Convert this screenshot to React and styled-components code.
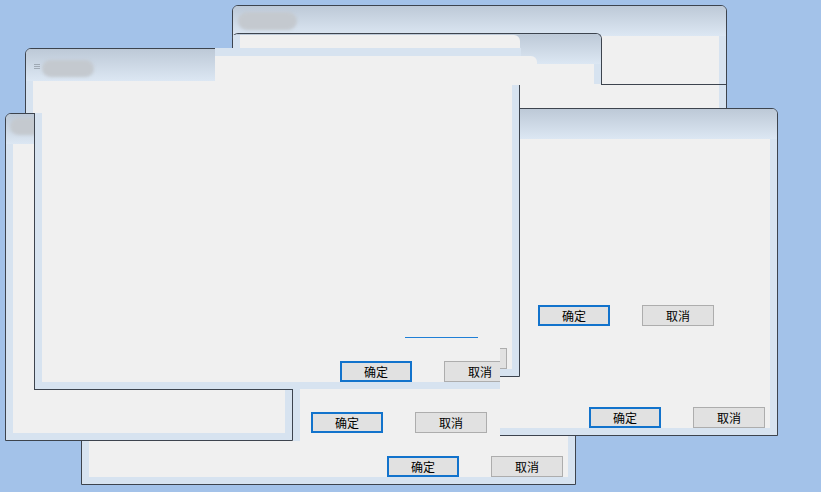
import React from "react";
import styled, { createGlobalStyle } from "styled-components";

const FRAME = "#d7e3f0";
const BORDER = "#3d444e";
const CLIENT = "#f0f0f0";
const DESK = "#a3c2e9";

const Global = createGlobalStyle`
  html, body { margin: 0; padding: 0; overflow: hidden; background: ${DESK}; }
  body { font-family: "Noto Sans CJK SC", "Noto Sans", sans-serif; }
`;

const Desktop = styled.div`
  position: relative;
  width: 821px;
  height: 492px;
  overflow: hidden;
  background: ${DESK};
`;

const Win = styled.div`
  position: absolute;
  left: ${(p) => p.$x}px;
  top: ${(p) => p.$y}px;
  width: ${(p) => p.$w}px;
  height: ${(p) => p.$h}px;
  box-sizing: border-box;
  display: flex;
  flex-direction: column;
  background: ${FRAME};
  border: 1px solid ${BORDER};
  border-bottom-width: ${(p) => (p.$open ? 0 : 1)}px;
  border-top-width: ${(p) => (p.$headless ? 0 : 1)}px;
  border-radius: ${(p) => (p.$headless ? "0" : "6px 6px 0 0")};
  overflow: hidden;
`;

const TitleBar = styled.div`
  flex: none;
  height: ${(p) => p.$h}px;
  background: linear-gradient(#bdc9d7, #dce7f3);
  display: flex;
  align-items: flex-start;
  gap: 2px;
  padding-left: ${(p) => p.$pad}px;
`;

const TitleBlur = styled.div`
  width: ${(p) => p.$w}px;
  height: ${(p) => p.$h}px;
  margin-top: ${(p) => p.$top}px;
  border-radius: 9px;
  background: #c4c9cf;
  filter: blur(1.5px);
`;

const TitleIcon = styled.svg`
  flex: none;
  margin-top: 15px;
  margin-left: -4px;
  opacity: 0.7;
`;

const Client = styled.div`
  flex: 1;
  position: relative;
  margin: 0 7px ${(p) => (p.$open ? 0 : 7)}px;
  background: ${CLIENT};
  display: flex;
  justify-content: flex-end;
  align-items: flex-end;
  padding: 0 5px 0;
`;

const ButtonRow = styled.div`
  display: flex;
  gap: 32px;
`;

const Btn = styled.button`
  box-sizing: border-box;
  width: 72px;
  height: 21px;
  margin: 0;
  padding: 0;
  display: flex;
  align-items: center;
  justify-content: center;
  background: #e1e1e1;
  border: ${(p) => (p.$primary ? "2px solid #1273cc" : "1px solid #adadad")};
  border-radius: 0;
  font: 12px "Noto Sans CJK SC", sans-serif;
  color: #000;
`;

const GhostRow = styled.div`
  position: absolute;
  left: ${(p) => p.$x}px;
  top: ${(p) => p.$y}px;
`;

const Seam = styled.div`
  position: absolute;
  left: ${(p) => p.$x}px;
  top: ${(p) => p.$y}px;
  width: ${(p) => p.$w}px;
  height: 1px;
  background: ${BORDER};
`;

const Scrap = styled.div`
  position: absolute;
  box-sizing: border-box;
  left: ${(p) => p.$x}px;
  top: ${(p) => p.$y}px;
  width: ${(p) => p.$w}px;
  height: ${(p) => p.$h}px;
  background: ${CLIENT};
  border-top: ${(p) => p.$bandTop || 0}px solid ${FRAME};
  border-left: ${(p) => p.$bandLeft || 0}px solid ${FRAME};
  border-top-right-radius: ${(p) => p.$r || 0}px;
`;

const Clip = styled.div`
  position: absolute;
  left: ${(p) => p.$x}px;
  top: ${(p) => p.$y}px;
  width: ${(p) => p.$w}px;
  height: ${(p) => p.$h}px;
  overflow: hidden;
`;

const FocusLine = styled.div`
  position: absolute;
  left: 363px;
  top: 224px;
  width: 73px;
  height: 1px;
  background: #1f7fd6;
`;

const GhostPanel = styled.div`
  position: absolute;
  left: 293px;
  top: 389px;
  width: 207px;
  height: 52px;
  box-sizing: border-box;
  border-left: 7px solid ${FRAME};
  background: ${CLIENT};
  padding: 23px 0 0 11px;
`;

const Buttons = ({ blank }) => (
  <ButtonRow>
    <Btn $primary>{blank ? "" : "确定"}</Btn>
    <Btn>{blank ? "" : "取消"}</Btn>
  </ButtonRow>
);

export default function App() {
  return (
    <Desktop>
      <Global />
      {/* back window A */}
      <Win $x={232} $y={5} $w={495} $h={329}>
        <TitleBar $h={30} $pad={5}>
          <TitleBlur $w={59} $h={18} $top={6} />
        </TitleBar>
        <Client>
          <Buttons blank />
        </Client>
      </Win>

      {/* window F (bottom) */}
      <Win $x={81} $y={156} $w={495} $h={329}>
        <TitleBar $h={30} $pad={5} />
        <Client>
          <Buttons />
        </Client>
      </Win>

      {/* window C (right) */}
      <Win $x={283} $y={108} $w={495} $h={328}>
        <TitleBar $h={30} $pad={5} />
        <Client>
          <Buttons />
        </Client>
      </Win>

      {/* repaint trail of A's buttons */}
      <GhostRow $x={538} $y={305}>
        <Buttons />
      </GhostRow>

      {/* window B */}
      <Win $x={232} $y={33} $w={370} $h={51} $open>
        <TitleBar $h={30} $pad={5} />
        <Client $open />
      </Win>
      <Seam $x={601} $y={84} $w={126} />

      {/* window D */}
      <Win $x={25} $y={48} $w={495} $h={329}>
        <TitleBar $h={32} $pad={12}>
          <TitleIcon width="6" height="5" viewBox="0 0 6 5">
            <path d="M0 0.5H6M0 2.5H6M0 4.5H6" stroke="#8d96a0" strokeWidth="1" />
          </TitleIcon>
          <TitleBlur $w={52} $h={17} $top={11} />
        </TitleBar>
        <Client>
          <Buttons blank />
        </Client>
      </Win>
      <Scrap $x={215} $y={48} $w={306} $h={37} $bandTop={8} />
      <Scrap $x={233} $y={35} $w={287} $h={13} $bandLeft={7} $r={6} />
      <Scrap $x={500} $y={56} $w={37} $h={8} $r={6} />

      {/* window E */}
      <Win $x={5} $y={113} $w={288} $h={328}>
        <TitleBar $h={30} $pad={4}>
          <TitleBlur $w={32} $h={17} $top={4} />
        </TitleBar>
        <Client />
      </Win>

      {/* D repainted lower body */}
      <Clip $x={34} $y={113} $w={466} $h={277}>
        <Win $x={0} $y={0} $w={495} $h={277} $headless>
          <Client>
            <FocusLine />
            <Buttons />
          </Client>
        </Win>
      </Clip>

      {/* trail panel with buttons */}
      <GhostPanel>
        <Buttons />
      </GhostPanel>
    </Desktop>
  );
}
